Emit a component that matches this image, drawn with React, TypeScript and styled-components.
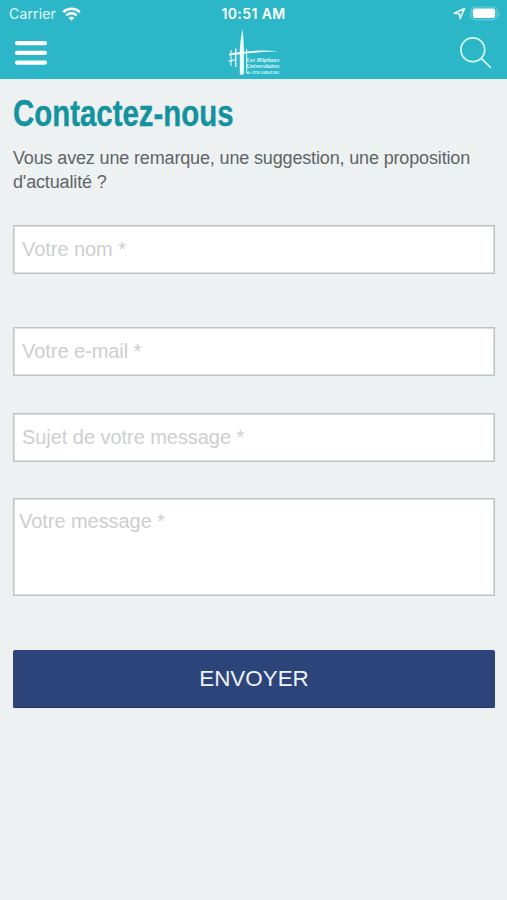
import React from "react";
import styled, { createGlobalStyle } from "styled-components";

const GlobalStyle = createGlobalStyle`
  * { box-sizing: border-box; }
  body { margin: 0; background: #edf1f2; font-family: "Liberation Sans", Arial, sans-serif; }
`;

const Screen = styled.div`
  display: flex;
  flex-direction: column;
  width: 507px;
  height: 900px;
  overflow: hidden;
  background: #edf1f2;
`;

const Header = styled.header`
  height: 79px;
  flex: none;
  background: #2cb7c8;
  color: #fff;
`;

const StatusBar = styled.div`
  display: grid;
  grid-template-columns: 1fr auto 1fr;
  align-items: center;
  height: 27px;
  padding: 0 6px;
  font-family: Inter, sans-serif;
  line-height: 16px;
`;

const Carrier = styled.div`
  display: flex;
  align-items: center;
  gap: 6px;
  padding-left: 3px;
  font-size: 14px;
  letter-spacing: 0.15px;
  color: #e4fbfd;
`;

const Clock = styled.div`
  font-size: 14px;
  font-weight: 600;
  letter-spacing: 0.4px;
`;

const StatusIcons = styled.div`
  display: flex;
  align-items: center;
  justify-content: flex-end;
  gap: 4px;
`;

const NavBar = styled.nav`
  display: grid;
  grid-template-columns: 1fr auto 1fr;
  height: 52px;
  padding: 0 15px 0 14px;
`;

const LogoLink = styled.div`
  display: flex;
  margin-left: 10px;
`;

const IconButton = styled.button<{ $end?: boolean }>`
  display: flex;
  align-items: center;
  justify-self: ${(p) => (p.$end ? "end" : "start")};
  height: 51px;
  padding: 0;
  border: 0;
  background: none;
  color: #fff;
`;

const Main = styled.main`
  padding: 12px 12px 0 13px;
`;

const Title = styled.h1`
  width: max-content;
  margin: 0;
  font-size: 37px;
  line-height: 45px;
  color: #14929f;
  -webkit-text-stroke: 0.4px #14929f;
  transform: scaleX(0.795);
  transform-origin: left;
`;

const Intro = styled.p`
  margin: 10px 0 0;
  font-size: 18px;
  line-height: 24px;
  letter-spacing: -0.15px;
  color: #606467;
`;

const Form = styled.form`
  display: flex;
  flex-direction: column;
  margin-top: 31px;
`;

const fieldFont = `
  display: block;
  width: 100%;
  border: 1px solid #bfc2c2;
  box-shadow: inset 0 0 0 1px #dddfdf;
  border-radius: 0;
  background: #fff;
  font-family: "Liberation Sans", Arial, sans-serif;
  font-size: 20px;
  line-height: 24px;
  letter-spacing: -0.05px;
  outline: 0;
  &::placeholder { color: #cdcece; opacity: 1; }
`;

const Field = styled.input<{ $gap: number }>`
  ${fieldFont}
  height: 49px;
  margin-bottom: ${(p) => p.$gap}px;
  padding: 0 8px;
`;

const MessageField = styled.textarea`
  ${fieldFont}
  height: 98px;
  padding: 10px 5px;
  resize: none;
`;

const Submit = styled.button`
  height: 58px;
  margin-top: 54px;
  padding: 0;
  border: 0;
  border-radius: 2px;
  background: #2d447b;
  box-shadow: inset 0 -1px #243768;
  color: #eef2fa;
  font-family: "Liberation Sans", Arial, sans-serif;
  font-size: 22.4px;
`;

const WifiIcon = () => (
  <svg width="19" height="14" viewBox="0 0 19 14" fill="none" stroke="#fff" strokeWidth="2.5">
    <path d="M1.2 5.1C5.8.6 13.2.6 17.8 5.1M4.3 8.3c2.9-2.7 7.5-2.7 10.4 0" />
    <path d="M9.5 13.7 6.6 10.8c1.6-1.4 4.2-1.4 5.8 0Z" fill="#fff" stroke="none" />
  </svg>
);

const LocationIcon = () => (
  <svg width="13" height="13" viewBox="0 0 13 13" fill="none" stroke="#e9fcfd" strokeWidth="1.6" strokeLinejoin="round">
    <path d="M11.6 1.5 1.2 6.2l5.2.5.6 5Z" />
  </svg>
);

const BatteryIcon = () => (
  <svg width="31" height="15" viewBox="0 0 31 15">
    <rect x="1" y="1" width="26" height="12.6" rx="4" fill="none" stroke="#68ccd8" strokeWidth="1.2" />
    <rect x="2.8" y="2.6" width="22.4" height="9.4" rx="2.2" fill="#fff" />
    <path d="M28.3 5.2c2 .8 2 3.8 0 4.6Z" fill="#68ccd8" />
  </svg>
);

const MenuIcon = () => (
  <svg width="34" height="26" viewBox="0 0 34 26" stroke="#fff" strokeWidth="4.2" strokeLinecap="round">
    <path d="M3 3.2h28M3 12.9h28M3 22.6h28" />
  </svg>
);

const SearchIcon = () => (
  <svg width="33" height="34" viewBox="0 0 33 34" fill="none" stroke="#d9fbfc" strokeWidth="1.7" strokeLinecap="round">
    <circle cx="13.8" cy="13.8" r="11.9" />
    <path d="m22.3 22.3 9.2 9.2" />
  </svg>
);

const Logo = () => (
  <svg width="60" height="52" viewBox="0 0 60 52">
    <g fill="#effeff">
      <path d="M14.4 2c.9 7 1.3 14 1.5 20v24.5q-2 3-4.1 0V22c.5-7 1.5-14 2.6-20Z" />
      <path d="M1 26.7C13 24.5 31 22.5 51 24.2 34 24.3 15 27.3 1 28.5Z" />
      <path d="M2.5 23h1v16h-1ZM7 21.5h1.4V40H7ZM.5 33.8l8-2V33l-8 2ZM18.2 22h.9v24h-.9Z" />
    </g>
    <g fill="#dff8fa" fontFamily="Liberation Serif, serif" fontSize="5.6" fontWeight="bold">
      <text x="18.5" y="35" fontStyle="italic" textLength="33" lengthAdjust="spacingAndGlyphs">Les Hôpitaux</text>
      <text x="18.5" y="41.3" fontStyle="italic" textLength="33" lengthAdjust="spacingAndGlyphs">Universitaires</text>
      <text x="18.5" y="47.2" fontSize="5" textLength="33" lengthAdjust="spacingAndGlyphs">de STRASBOURG</text>
    </g>
  </svg>
);

export default function App() {
  return (
    <>
      <GlobalStyle />
      <Screen>
        <Header>
          <StatusBar>
            <Carrier>Carrier <WifiIcon /></Carrier>
            <Clock>10:51 AM</Clock>
            <StatusIcons><LocationIcon /><BatteryIcon /></StatusIcons>
          </StatusBar>
          <NavBar>
            <IconButton aria-label="Menu"><MenuIcon /></IconButton>
            <LogoLink><Logo /></LogoLink>
            <IconButton $end aria-label="Rechercher"><SearchIcon /></IconButton>
          </NavBar>
        </Header>
        <Main>
          <Title>Contactez-nous</Title>
          <Intro>Vous avez une remarque, une suggestion, une proposition d'actualité ?</Intro>
          <Form onSubmit={(e) => e.preventDefault()}>
            <Field $gap={53} placeholder="Votre nom *" />
            <Field $gap={37} type="email" placeholder="Votre e-mail *" />
            <Field $gap={36} placeholder="Sujet de votre message *" />
            <MessageField placeholder="Votre message *" />
            <Submit type="submit">ENVOYER</Submit>
          </Form>
        </Main>
      </Screen>
    </>
  );
}
